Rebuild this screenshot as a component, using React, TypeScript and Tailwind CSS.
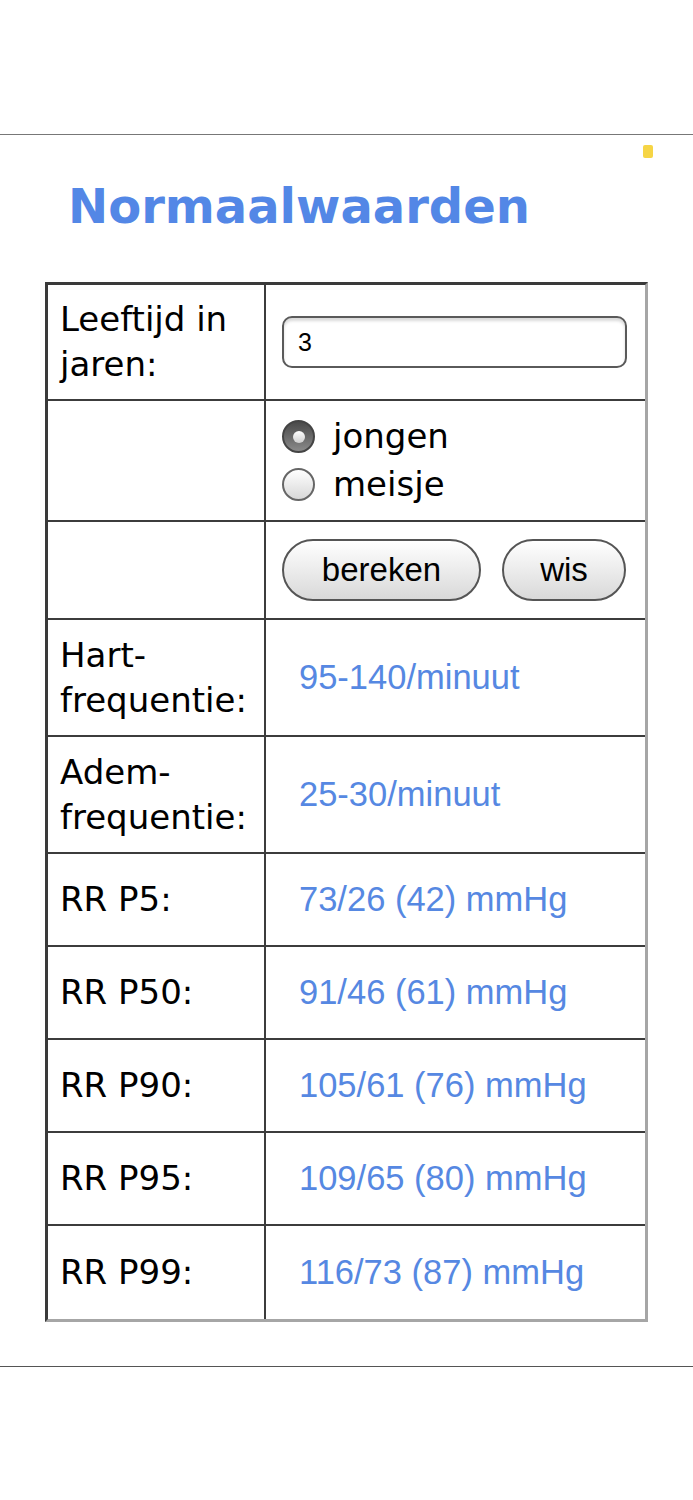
import React from 'react';

const label = "font-['DejaVu_Sans',Verdana,sans-serif] text-[34px] leading-[45px] text-black";
const value = "font-['Liberation_Sans',Arial,sans-serif] text-[34.5px] text-[#5688e2]";

const results: [string, string][] = [
  ['RR P5:', '73/26 (42) mmHg'],
  ['RR P50:', '91/46 (61) mmHg'],
  ['RR P90:', '105/61 (76) mmHg'],
  ['RR P95:', '109/65 (80) mmHg'],
  ['RR P99:', '116/73 (87) mmHg'],
];

function Radio({ checked }: { checked?: boolean }) {
  if (checked) {
    return (
      <span className="flex h-[33px] w-[33px] items-center justify-center rounded-full border-2 border-[#444] bg-gradient-to-b from-[#4a4a4a] to-[#8a8a8a]">
        <span className="h-[12px] w-[12px] rounded-full bg-gradient-to-b from-[#ffffff] to-[#cfcfcf]" />
      </span>
    );
  }
  return (
    <span className="h-[33px] w-[33px] rounded-full border-2 border-[#666] bg-gradient-to-b from-[#ffffff] to-[#d8d8d8]" />
  );
}

function Button({ children, width }: { children: React.ReactNode; width: string }) {
  return (
    <button
      className={`${width} h-[62px] rounded-full border-2 border-[#555] bg-gradient-to-b from-[#ffffff] to-[#d9d9d9] font-['Liberation_Sans',Arial,sans-serif] text-[33px] text-black`}
    >
      {children}
    </button>
  );
}

export default function App() {
  const cell = 'border-r-2 border-b-2 border-[#3c3c3c]';
  return (
    <div className="min-h-[1500px] bg-white">
      <div className="h-[135px] border-b border-[#777]" />

      <section className="relative">
        <span className="absolute left-[643px] top-[10px] h-[13px] w-[10px] rounded-[2px] bg-[#f6d545]" />

        <h1 className="ml-[68px] pt-[43px] font-['DejaVu_Sans',Verdana,sans-serif] text-[48px] font-bold leading-[56px] text-[#5387e6]">
          Normaalwaarden
        </h1>

        <table className="ml-[45px] mt-[48px] w-[603px] border-separate border-spacing-0 border-t-[3px] border-l-[3px] border-r-[3px] border-b-[3px] border-t-[#3a3a3a] border-l-[#3a3a3a] border-r-[#a6a6a6] border-b-[#a6a6a6]">
          <tbody>
            <tr className="h-[116px]">
              <td className={`${cell} w-[218px] pl-[12px] ${label}`}>
                Leeftijd in
                <br />
                jaren:
              </td>
              <td className="border-b-2 border-[#3c3c3c] px-[16px]">
                <input
                  type="text"
                  defaultValue="3"
                  className="h-[52px] w-[345px] rounded-[10px] border-2 border-[#5a5a5a] bg-white px-[14px] font-['Liberation_Sans',Arial,sans-serif] text-[25px] text-black shadow-[inset_0_3px_3px_rgba(0,0,0,0.15)] outline-none"
                />
              </td>
            </tr>

            <tr className="h-[121px]">
              <td className={cell} />
              <td className="border-b-2 border-[#3c3c3c] px-[16px]">
                <div className="flex flex-col">
                  <label className="flex items-center gap-[18px]">
                    <Radio checked />
                    <span className={label}>jongen</span>
                  </label>
                  <label className="mt-[3px] flex items-center gap-[18px]">
                    <Radio />
                    <span className={label}>meisje</span>
                  </label>
                </div>
              </td>
            </tr>

            <tr className="h-[98px]">
              <td className={cell} />
              <td className="border-b-2 border-[#3c3c3c] px-[16px]">
                <div className="flex items-center gap-[21px]">
                  <Button width="w-[199px]">bereken</Button>
                  <Button width="w-[124px]">wis</Button>
                </div>
              </td>
            </tr>

            <tr className="h-[117px]">
              <td className={`${cell} pl-[12px] ${label}`}>
                Hart-
                <br />
                frequentie:
              </td>
              <td className={`border-b-2 border-[#3c3c3c] pl-[33px] ${value}`}>95-140/minuut</td>
            </tr>

            <tr className="h-[117px]">
              <td className={`${cell} pl-[12px] ${label}`}>
                Adem-
                <br />
                frequentie:
              </td>
              <td className={`border-b-2 border-[#3c3c3c] pl-[33px] ${value}`}>25-30/minuut</td>
            </tr>

            {results.map(([name, val], i) => {
              const last = i === results.length - 1;
              return (
                <tr key={name} className="h-[93px]">
                  <td
                    className={
                      last
                        ? `border-r-2 border-[#3c3c3c] pl-[12px] ${label}`
                        : `${cell} pl-[12px] ${label}`
                    }
                  >
                    {name}
                  </td>
                  <td
                    className={
                      last ? `pl-[33px] ${value}` : `border-b-2 border-[#3c3c3c] pl-[33px] ${value}`
                    }
                  >
                    {val}
                  </td>
                </tr>
              );
            })}
          </tbody>
        </table>

        <div className="mt-[44px] border-t border-[#555]" />
      </section>
    </div>
  );
}
